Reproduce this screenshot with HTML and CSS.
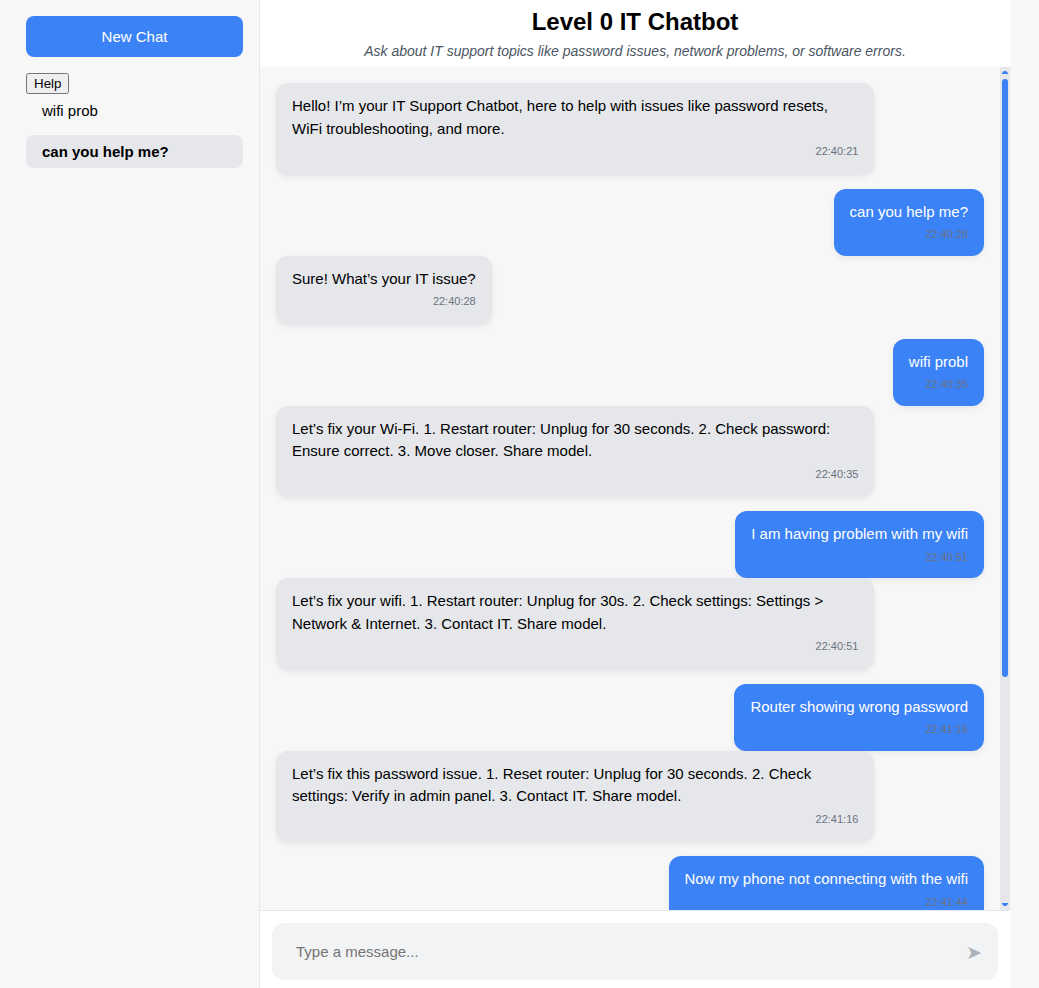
FILE: index.html
```html
<!DOCTYPE html>
<html lang="en">
<head>
<meta charset="utf-8">
<meta name="viewport" content="width=device-width, initial-scale=1">
<title>Level 0 IT Chatbot</title>
<link rel="stylesheet" href="styles.css">
</head>
<body>
<div class="app">
  <aside class="sidebar">
    <button type="button" class="new-chat">New Chat</button>
    <button type="button" class="help">Help</button>
    <ul class="history">
      <li><button type="button" class="history-item">wifi prob</button></li>
      <li><button type="button" class="history-item active" aria-current="true">can you help me?</button></li>
    </ul>
  </aside>
  <main class="main">
    <header class="header">
      <h1 class="title">Level 0 IT Chatbot</h1>
      <p class="subtitle">Ask about IT support topics like password issues, network problems, or software errors.</p>
    </header>
    <div class="conversation">
      <section class="messages" aria-label="Conversation">
        <div class="message bot"><p>Hello! I’m your IT Support Chatbot, here to help with issues like password resets, WiFi troubleshooting, and more.</p><time>22:40:21</time></div>
        <div class="message user"><p>can you help me?</p><time>22:40:28</time></div>
        <div class="message bot"><p>Sure! What’s your IT issue?</p><time>22:40:28</time></div>
        <div class="message user"><p>wifi probl</p><time>22:40:35</time></div>
        <div class="message bot"><p>Let’s fix your Wi-Fi. 1. Restart router: Unplug for 30 seconds. 2. Check password: Ensure correct. 3. Move closer. Share model.</p><time>22:40:35</time></div>
        <div class="message user"><p>I am having problem with my wifi</p><time>22:40:51</time></div>
        <div class="message bot"><p>Let’s fix your wifi. 1. Restart router: Unplug for 30s. 2. Check settings: Settings &gt; Network &amp; Internet. 3. Contact IT. Share model.</p><time>22:40:51</time></div>
        <div class="message user"><p>Router showing wrong password</p><time>22:41:16</time></div>
        <div class="message bot"><p>Let’s fix this password issue. 1. Reset router: Unplug for 30 seconds. 2. Check settings: Verify in admin panel. 3. Contact IT. Share model.</p><time>22:41:16</time></div>
        <div class="message user"><p>Now my phone not connecting with the wifi</p><time>22:41:44</time></div>
      </section>
      <div class="scrollbar" aria-hidden="true">
        <svg class="scroll-arrow" viewBox="0 0 6 3"><path d="M0 3V2L2 0H4L6 2V3Z"/></svg>
        <div class="scroll-track"><div class="scroll-thumb"></div></div>
        <svg class="scroll-arrow" viewBox="0 0 6 3"><path d="M0 0V1L2 3H4L6 1V0Z"/></svg>
      </div>
    </div>
    <form class="composer">
      <div class="field">
        <input type="text" class="field-input" placeholder="Type a message..." aria-label="Message">
        <button type="button" class="send" aria-label="Send">➤</button>
      </div>
    </form>
  </main>
</div>
</body>
</html>
```
FILE: styles.css
```css
* {
  box-sizing: border-box;
}

body {
  margin: 0;
  background: #f7f7f7;
  color: #000;
  font-family: "Liberation Sans", Arial, sans-serif;
  font-size: 15px;
}

.app {
  display: flex;
  height: 100vh;
  padding: 0 29px 0 10px;
}

.sidebar {
  flex: 0 0 25%;
  display: flex;
  flex-direction: column;
  align-items: flex-start;
  padding: 16px;
  border-right: 1px solid #e5e7eb;
}

.new-chat {
  width: 100%;
  margin-bottom: 16px;
  padding: 12px;
  border: 0;
  border-radius: 8px;
  background: #3b82f6;
  color: #fff;
  font: inherit;
}

.history {
  display: flex;
  flex-direction: column;
  gap: 8px;
  width: 100%;
  margin: 0;
  padding: 0;
  list-style: none;
}

.history-item {
  display: block;
  width: 100%;
  padding: 8px 16px;
  border: 0;
  border-radius: 8px;
  background: transparent;
  color: inherit;
  font: inherit;
  text-align: left;
}

.history-item.active {
  background: #e5e7eb;
  font-weight: bold;
}

.main {
  flex: 1;
  display: flex;
  flex-direction: column;
  min-width: 0;
}

.header {
  padding: 8px 16px;
  background: #fff;
  text-align: center;
}

.title {
  margin: 0 0 8px;
  font-size: 24px;
  line-height: 27px;
}

.subtitle {
  margin: 0;
  color: #4b5563;
  font-size: 14px;
  font-style: italic;
  line-height: 16px;
}

.conversation {
  flex: 1;
  display: flex;
  min-height: 0;
}

.messages {
  flex: 1;
  display: flex;
  flex-direction: column;
  min-width: 0;
  padding: 16px;
  overflow-y: auto;
  scrollbar-width: none;
}

.message {
  flex: none;
  box-sizing: content-box;
  max-width: 80%;
  padding: 12px 16px;
  border-radius: 12px;
  box-shadow: 0 2px 6px rgba(0, 0, 0, 0.07);
  line-height: 1.5;
}

.message p {
  margin: 0;
}

.message time {
  display: block;
  margin: 3px 0 1px;
  color: #6b7280;
  font-size: 11px;
  text-align: right;
}

.bot {
  align-self: flex-start;
  margin-bottom: 14px;
  padding-bottom: 14px;
  background: #e5e7eb;
}

.user {
  align-self: flex-end;
  background: #3b82f6;
  color: #fff;
}

.scrollbar {
  flex: 0 0 10px;
  display: flex;
  flex-direction: column;
  align-items: center;
  gap: 5px;
  padding: 4px 2px;
  background: #e5e7eb;
}

.scroll-arrow {
  flex: none;
  width: 6px;
  height: 3px;
  fill: #3b82f6;
}

.scroll-track {
  flex: 1;
  width: 100%;
}

.scroll-thumb {
  height: 73%;
  border-radius: 3px;
  background: #3b82f6;
}

.composer {
  padding: 12px 12px 8px;
  border-top: 1px solid #e5e7eb;
  background: #fff;
}

.field {
  display: flex;
  align-items: center;
  padding: 0 16px 0 24px;
  border-radius: 12px;
  background: #f1f3f5;
}

.field-input {
  flex: 1;
  min-width: 0;
  padding: 20px 0;
  border: 0;
  outline: 0;
  background: transparent;
  color: inherit;
  font: inherit;
}

.field-input::placeholder {
  color: #757575;
}

.send {
  padding: 0;
  border: 0;
  background: transparent;
  color: #adb1b8;
  font-family: "DejaVu Sans", sans-serif;
  font-size: 19px;
}
```
